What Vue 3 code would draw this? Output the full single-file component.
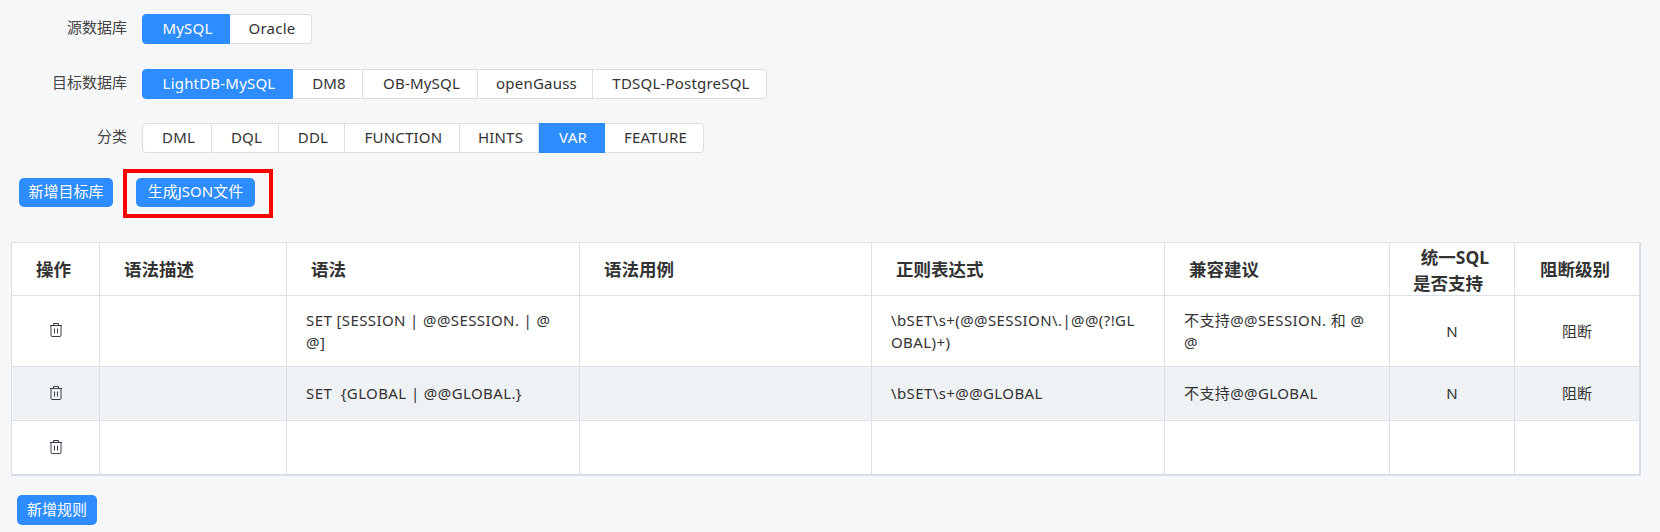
<script setup>
const groups = [
  { label: '源数据库', active: 'MySQL', items: [['MySQL', 88], ['Oracle', 82]] },
  { label: '目标数据库', active: 'LightDB-MySQL', items: [['LightDB-MySQL', 151], ['DM8', 70], ['OB-MySQL', 115], ['openGauss', 115], ['TDSQL-PostgreSQL', 174]] },
  { label: '分类', active: 'VAR', items: [['DML', 70], ['DQL', 67], ['DDL', 66], ['FUNCTION', 115], ['HINTS', 79], ['VAR', 66], ['FEATURE', 99]] }
]
const rows = [
  { cls: 'r1', syntax: 'SET [SESSION | @@SESSION. | @@]', regex: '\\bSET\\s+(@@SESSION\\.|@@(?!GLOBAL)+)', advice: '不支持@@SESSION. 和 @@', sup: 'N', level: '阻断' },
  { cls: 'r2', syntax: 'SET  {GLOBAL | @@GLOBAL.}', regex: '\\bSET\\s+@@GLOBAL', advice: '不支持@@GLOBAL', sup: 'N', level: '阻断' },
  { cls: 'r3', syntax: '', regex: '', advice: '', sup: '', level: '' }
]
</script>

<template>
  <div class="page">
    <div v-for="g in groups" :key="g.label" class="form-row">
      <label class="form-label">{{ g.label }}</label>
      <div class="radio-group">
        <span
          v-for="[item, w] in g.items"
          :key="item"
          class="radio"
          :class="{ active: item === g.active }"
          :style="{ width: w + 'px' }"
        >{{ item }}</span>
      </div>
    </div>

    <div class="toolbar">
      <button class="btn first">新增目标库</button>
      <div class="highlight">
        <button class="btn json">生成JSON文件</button>
      </div>
    </div>

    <div class="table-wrap">
      <table class="grid">
        <colgroup>
          <col class="c1" /><col class="c2" /><col class="c3" /><col class="c4" />
          <col class="c5" /><col class="c6" /><col class="c7" /><col class="c8" />
        </colgroup>
        <thead>
          <tr>
            <th class="center">操作</th>
            <th>语法描述</th>
            <th>语法</th>
            <th>语法用例</th>
            <th>正则表达式</th>
            <th>兼容建议</th>
            <th class="center two"><span class="sql-line">统一SQL</span><br /><span class="sup-line">是否支持</span></th>
            <th class="center">阻断级别</th>
          </tr>
        </thead>
        <tbody>
          <tr v-for="(r, i) in rows" :key="i" :class="r.cls">
            <td class="center">
              <svg class="trash" viewBox="0 0 12 14" width="12" height="14" fill="none" stroke="#3a3f4a" stroke-width="1">
                <path d="M0 2.5h12" />
                <path d="M1 2.5v10c0 .6.4 1 1 1h8c.6 0 1-.4 1-1v-10" />
                <path d="M3.5 2.5V.5h5v2" />
                <path d="M4.5 5.5v5M7.5 5.5v5" />
              </svg>
            </td>
            <td></td>
            <td class="text">{{ r.syntax }}</td>
            <td></td>
            <td class="text">{{ r.regex }}</td>
            <td class="text">{{ r.advice }}</td>
            <td class="center">{{ r.sup }}</td>
            <td class="center">{{ r.level }}</td>
          </tr>
        </tbody>
      </table>
    </div>

    <button class="btn add-rule">新增规则</button>
  </div>
</template>

<style>
html, body { margin: 0; background: #f6f7f9; }
</style>

<style scoped>
.page {
  box-sizing: border-box;
  width: 1660px;
  height: 532px;
  padding-top: 14px;
  overflow: hidden;
  background: #f6f7f9;
  color: #333;
  font-family: "Noto Sans", "Noto Sans CJK SC", sans-serif;
  font-size: 15px;
  line-height: 22.5px;
}
.form-row {
  display: flex;
  align-items: center;
  height: 30px;
  margin-bottom: 24.5px;
}
.form-label {
  width: 127px;
  margin-right: 15px;
  padding-bottom: 3px;
  text-align: right;
  color: #444;
}
.radio-group { display: flex; }
.radio {
  box-sizing: border-box;
  height: 30px;
  padding-left: 3px;
  line-height: 26px;
  letter-spacing: 0.2px;
  text-align: center;
  background: #fff;
  border: 1px solid #dcdee2;
  border-left-width: 0;
  white-space: nowrap;
}
.radio:first-child { border-left-width: 1px; border-radius: 4px 0 0 4px; }
.radio:last-child { border-radius: 0 4px 4px 0; }
.radio.active { background: #2d8cff; border-color: #2d8cff; color: #fff; }
.toolbar {
  display: flex;
  align-items: flex-start;
  margin-top: -8.5px;
  padding-left: 19px;
}
.btn {
  box-sizing: border-box;
  height: 29px;
  padding: 0 0 2px;
  border: 0;
  border-radius: 5px;
  background: #2d8cff;
  color: #fff;
  font: inherit;
  text-align: center;
  white-space: nowrap;
}
.first { width: 94px; margin-top: 9px; }
.json { width: 119px; }
.highlight {
  box-sizing: border-box;
  display: flex;
  width: 150px;
  height: 49px;
  margin-left: 10px;
  padding: 5px 14px 7px 9px;
  border: 4px solid #ff0000;
}
.table-wrap {
  box-sizing: border-box;
  width: 1630px;
  margin: 24px 0 0 11px;
  border-top: 1px solid #dcdfe6;
  border-left: 1px solid #dcdfe6;
  border-right: 2px solid #d8dde8;
  border-bottom: 2px solid #d8dde8;
}
.grid {
  table-layout: fixed;
  width: 1627px;
  border-collapse: separate;
  border-spacing: 0;
  background: #fff;
}
.c1 { width: 88px; }
.c2 { width: 187px; }
.c3 { width: 293px; }
.c4 { width: 292px; }
.c5 { width: 293px; }
.c6 { width: 225px; }
.c7 { width: 125px; }
.c8 { width: 124px; }
th, td {
  box-sizing: border-box;
  padding: 0 20px 0 19px;
  border-right: 1px solid #dcdfe6;
  border-bottom: 1px solid #dcdfe6;
  text-align: left;
  vertical-align: middle;
}
th {
  height: 53px;
  padding: 0 10px 0 24px;
  font-size: 17.5px;
  line-height: 26px;
  font-weight: 700;
}
tbody tr:last-child td { border-bottom: 0; }
th:last-child, td:last-child { border-right: 0; }
td.center { padding: 0; text-align: center; }
th.center { padding: 0 4px 0 0; text-align: center; }
th.two { padding: 0; }
.sql-line { position: relative; left: 3px; top: 1px; }
.sup-line { position: relative; left: -4px; top: 1px; }
.text { white-space: pre-wrap; word-break: break-all; letter-spacing: 0.4px; }
.r1 td { height: 71px; }
.r2 td { height: 54px; background: #eff2f5; }
.r3 td { height: 53px; }
.trash { display: block; margin: -2px auto 0; }
.add-rule {
  display: block;
  height: 30px;
  width: 80px;
  margin: 19px 0 0 17px;
}
</style>
